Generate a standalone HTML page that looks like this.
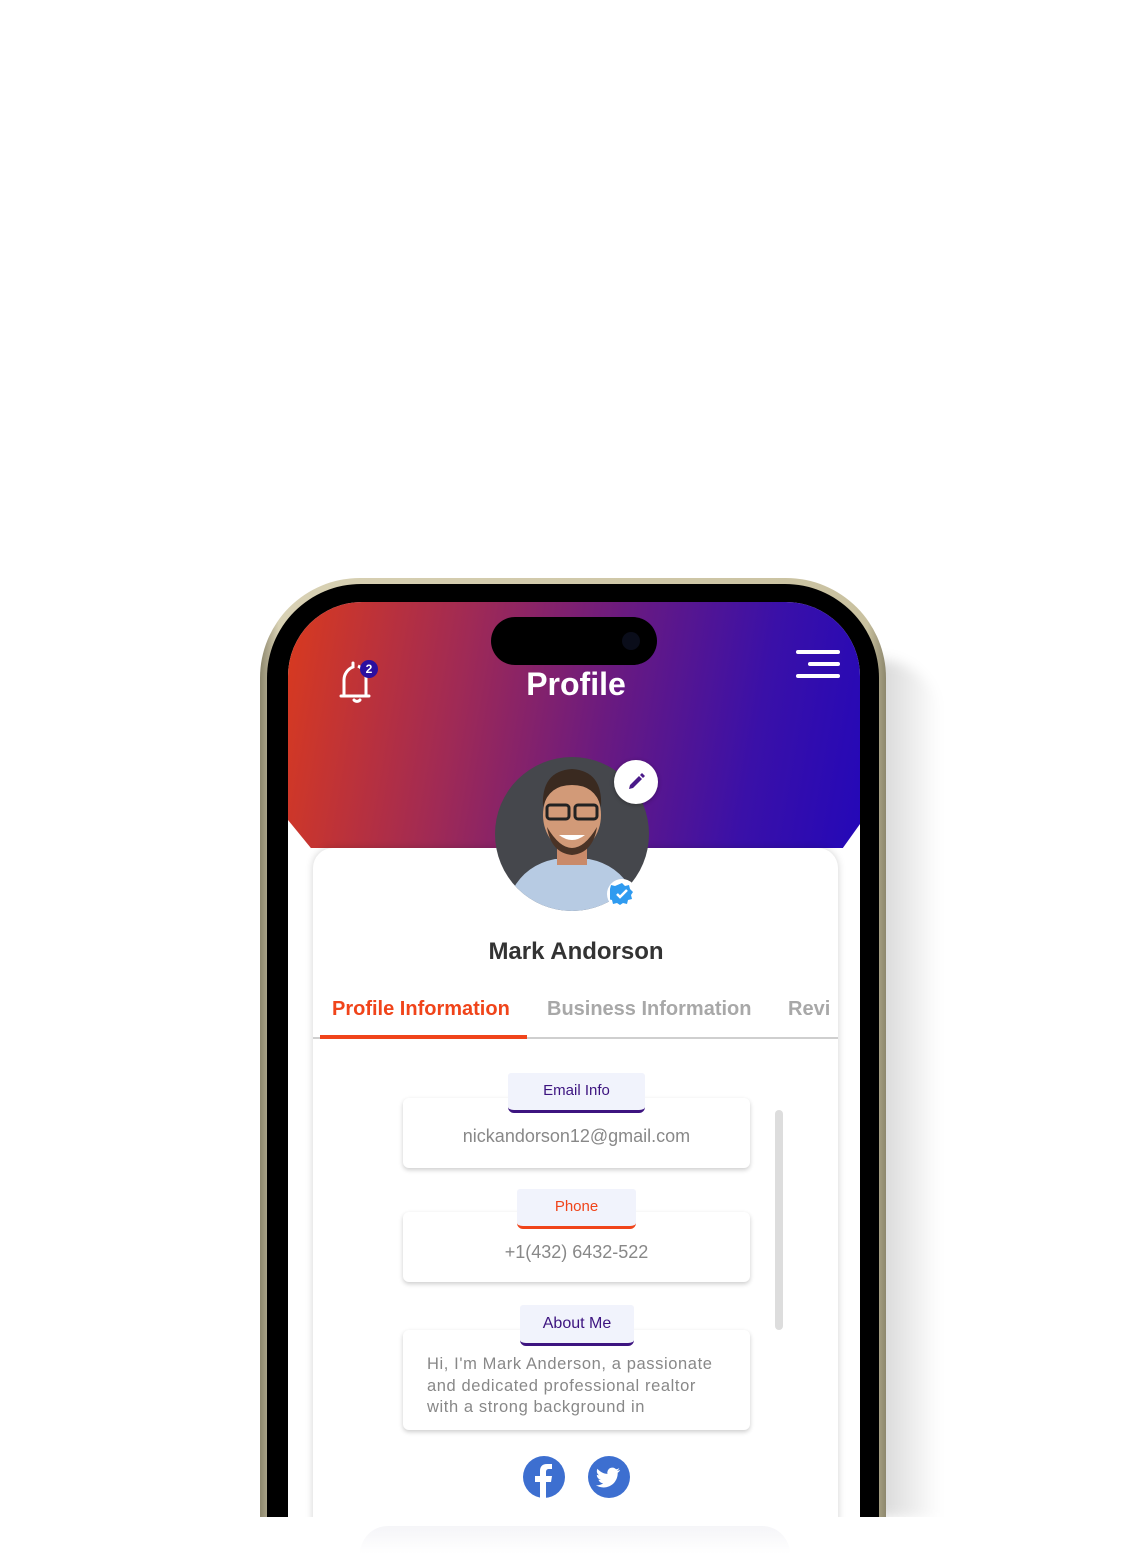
<!DOCTYPE html>
<html><head><meta charset="utf-8"><style>
*{margin:0;padding:0;box-sizing:border-box}
html,body{width:1140px;height:1554px;overflow:hidden}
body{background:#fff;position:relative;font-family:"Liberation Sans",Roboto,sans-serif}
.abs{position:absolute}
.lbl{position:absolute;background:#f1f3fc;border-radius:3px 3px 6px 6px;text-align:center;font-size:15px;line-height:36px}
.box{position:absolute;left:403px;width:347px;background:#fff;border-radius:6px;box-shadow:0 2px 5px rgba(0,0,0,.2);color:#888}
</style></head><body>
<div class="abs" style="left:870px;top:660px;width:70px;height:857px;background:linear-gradient(90deg,rgba(0,0,0,.18),rgba(0,0,0,0));border-radius:0 60px 0 0;filter:blur(6px)"></div>
<div class="abs" style="left:260px;top:578px;width:626px;height:976px;border-radius:100px 100px 0 0;background:linear-gradient(90deg,#8d876d,#d8d1b4 3%,#c9c1a0 97%,#8d876d);"></div>
<div class="abs" style="left:267px;top:584px;width:612px;height:970px;border-radius:94px 94px 0 0;background:#000"></div>
<div class="abs" style="left:288px;top:602px;width:572px;height:952px;border-radius:74px 74px 0 0;overflow:hidden;background:#fff">
  <div class="abs" style="left:0;top:0;width:572px;height:250px;background:linear-gradient(100deg,#d93a1e 0%,#a02a55 30%,#6a1a80 55%,#3a10a8 80%,#2408b8 100%);clip-path:polygon(0 0,100% 0,100% 222px,97% 246px,4% 246px,0 218px)"></div>
  <div class="abs" style="left:25px;top:246px;width:525px;height:800px;background:#fff;border-radius:20px;box-shadow:0 0 8px rgba(0,0,0,.18)"></div>
</div>
<div class="abs" style="left:491px;top:617px;width:166px;height:48px;border-radius:24px;background:#000"></div>
<div class="abs" style="left:622px;top:632px;width:18px;height:18px;border-radius:50%;background:#0a0d1a"></div>
<svg class="abs" style="left:336px;top:660px" width="44" height="46" viewBox="0 0 44 46"><path d="M8 36V20a14 14 0 0 1 9-13V3M30 20v16M5 36h28M18 40a4 4 0 0 0 6 0" fill="none" stroke="#fff" stroke-width="3" stroke-linecap="round"/><path d="M22 6a14 14 0 0 1 8 14" fill="none" stroke="#fff" stroke-width="3"/></svg>
<div class="abs" style="left:360px;top:660px;width:18px;height:18px;border-radius:50%;background:#2c0fa0;color:#fff;font-size:12px;line-height:18px;text-align:center;font-weight:bold">2</div>
<div class="abs" style="left:476px;top:666px;width:200px;text-align:center;color:#fff;font-size:32px;font-weight:bold">Profile</div>
<div class="abs" style="left:796px;top:650px;width:44px;height:4px;background:#fff;border-radius:2px"></div>
<div class="abs" style="left:808px;top:662px;width:32px;height:4px;background:#fff;border-radius:2px"></div>
<div class="abs" style="left:796px;top:674px;width:44px;height:4px;background:#fff;border-radius:2px"></div>
<svg class="abs" style="left:495px;top:757px" width="154" height="154" viewBox="0 0 154 154"><defs><clipPath id="c"><circle cx="77" cy="77" r="77"/></clipPath></defs><g clip-path="url(#c)"><rect width="154" height="154" fill="#45474c"/><path d="M10 154 Q20 110 60 102 L94 102 Q134 110 144 154Z" fill="#b7cbe3"/><rect x="62" y="86" width="30" height="22" fill="#c98a6a"/><ellipse cx="77" cy="58" rx="29" ry="36" fill="#d29a78"/><path d="M48 50 Q46 14 77 12 Q108 14 106 50 Q100 28 77 28 Q54 28 48 50Z" fill="#3a2a20"/><path d="M52 70 Q77 112 102 70 Q98 96 77 98 Q56 96 52 70Z" fill="#4a3326"/><rect x="52" y="48" width="22" height="14" rx="3" fill="none" stroke="#222" stroke-width="3"/><rect x="80" y="48" width="22" height="14" rx="3" fill="none" stroke="#222" stroke-width="3"/><path d="M64 78 Q77 88 90 78" fill="#fff"/></g></svg>
<div class="abs" style="left:614px;top:760px;width:44px;height:44px;border-radius:50%;background:#fff;box-shadow:0 1px 4px rgba(0,0,0,.3)"></div>
<svg class="abs" style="left:624px;top:770px" width="24" height="24" viewBox="0 0 24 24"><path d="M5 19l1-4 9-9 3 3-9 9z M16 5l2-2 3 3-2 2z" fill="#4a1a8a"/></svg>
<div class="abs" style="left:607px;top:879px;width:30px;height:30px;border-radius:50%;background:#fff"></div>
<svg class="abs" style="left:610px;top:882px" width="24" height="24" viewBox="0 0 24 24"><path d="M12 1l3 3 4-1 1 4 3 3-2 3 1 4-4 1-1 4-4-1-3 2-3-2-4 1-1-4-4-1 1-4-2-3 3-3 1-4 4 1z" fill="#2f9bf0"/><path d="M7 12l3 3 7-7" fill="none" stroke="#fff" stroke-width="2.5"/></svg>
<div class="abs" style="left:400px;top:938px;width:352px;text-align:center;font-size:24px;font-weight:bold;color:#333">Mark Andorson</div>
<div class="abs" style="left:332px;top:998px;font-size:20px;font-weight:bold;color:#f0441a">Profile Information</div>
<div class="abs" style="left:547px;top:998px;font-size:20px;font-weight:bold;color:#a8a8a8">Business Information</div>
<div class="abs" style="left:788px;top:998px;font-size:20px;font-weight:bold;color:#a8a8a8">Revi</div>
<div class="abs" style="left:313px;top:1037px;width:525px;height:2px;background:#cfcfcf"></div>
<div class="abs" style="left:320px;top:1035px;width:207px;height:4px;background:#f0441a"></div>
<div class="abs" style="left:775px;top:1110px;width:8px;height:220px;background:#ddd;border-radius:4px"></div>
<div class="box" style="top:1098px;height:70px;text-align:center;font-size:18px;line-height:76px">nickandorson12@gmail.com</div>
<div class="lbl" style="left:508px;top:1073px;width:137px;height:40px;border-bottom:3px solid #3d1480;color:#3d1480">Email Info</div>
<div class="box" style="top:1212px;height:70px;text-align:center;font-size:18px;line-height:80px">+1(432) 6432-522</div>
<div class="lbl" style="left:517px;top:1189px;width:119px;height:40px;border-bottom:3px solid #f0441a;color:#f0441a">Phone</div>
<div class="box" style="top:1330px;height:100px;padding:24px 0 0 24px;font-size:16.5px;line-height:21.5px;letter-spacing:.6px">Hi, I'm Mark Anderson, a passionate<br>and dedicated professional realtor<br>with a strong background in</div>
<div class="lbl" style="left:520px;top:1305px;width:114px;height:41px;border-bottom:3px solid #3d1480;color:#3d1480;font-size:16px;line-height:38px">About Me</div>
<svg class="abs" style="left:523px;top:1456px" width="42" height="42" viewBox="0 0 42 42"><circle cx="21" cy="21" r="21" fill="#3d6fd0"/><path d="M23 42V26h5l1-6h-6v-4c0-2 1-3 3-3h3V8h-5c-5 0-7 3-7 7v5h-5v6h5v16z" fill="#fff"/></svg>
<svg class="abs" style="left:588px;top:1456px" width="42" height="42" viewBox="0 0 42 42"><circle cx="21" cy="21" r="21" fill="#3d6fd0"/><path d="M32 14c-1 .5-2 .7-3 .8 1-.6 2-1.6 2.3-2.7-1 .6-2 1-3.2 1.2a5 5 0 0 0-8.6 4.6c-4-.2-7.7-2.2-10-5.2-1.4 2.4-.5 5.2 1.6 6.6-.8 0-1.6-.3-2.3-.6 0 2.4 1.7 4.5 4 5-.7.2-1.5.2-2.3.1.7 2 2.6 3.4 4.7 3.5-2.1 1.6-4.7 2.3-7.3 2 2.2 1.4 4.9 2.2 7.6 2.2 9.2 0 14.5-7.800 14.2-14.7 1-.7 1.8-1.6 2.4-2.6z" fill="#fff"/></svg>
<div class="abs" style="left:0;top:1517px;width:1140px;height:37px;background:#fff;z-index:10"></div>
<div class="abs" style="left:360px;top:1526px;width:430px;height:28px;border-radius:30px 30px 0 0;background:linear-gradient(#f5f5f8,#fff);z-index:11"></div>
</body></html>
